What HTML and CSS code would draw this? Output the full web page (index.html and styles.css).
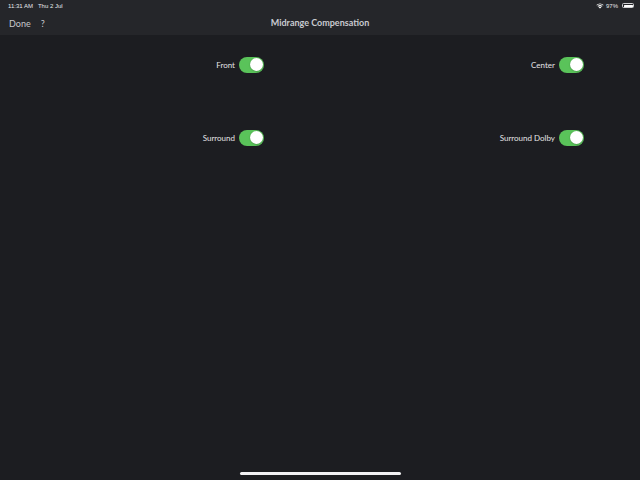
FILE: index.html
```html
<!DOCTYPE html>
<html>
<head>
<meta charset="utf-8">
<link rel="stylesheet" href="styles.css">
</head>
<body>
<div class="screen">
  <header class="top">
    <div class="status">
      <div class="status-left"><span>11:31 AM</span><span>Thu 2 Jul</span></div>
      <div class="status-right">
        <svg class="wifi" width="8" height="6" viewBox="0 0 8 6"><path d="M4 5.6 L2.6 4.2 A2 2 0 0 1 5.4 4.2 Z" fill="#fff"/><path d="M1.6 3.2 A3.4 3.4 0 0 1 6.4 3.2 L5.8 3.8 A2.6 2.6 0 0 0 2.2 3.8 Z" fill="#fff"/><path d="M0.4 2 A5 5 0 0 1 7.6 2 L7 2.6 A4.2 4.2 0 0 0 1 2.6 Z" fill="#fff"/></svg>
        <span>97%</span>
        <span class="battery"><span class="battery-fill"></span></span>
      </div>
    </div>
    <nav class="nav">
      <div class="nav-left"><span>Done</span><span>?</span></div>
      <div class="nav-title">Midrange Compensation</div>
    </nav>
  </header>
  <main class="content">
    <div class="grid">
      <div class="cell"><span class="label">Front</span><span class="toggle"><span class="knob"></span></span></div>
      <div class="cell"><span class="label">Center</span><span class="toggle"><span class="knob"></span></span></div>
      <div class="cell"><span class="label">Surround</span><span class="toggle"><span class="knob"></span></span></div>
      <div class="cell"><span class="label">Surround Dolby</span><span class="toggle"><span class="knob"></span></span></div>
    </div>
  </main>
  <div class="home"><span class="home-bar"></span></div>
</div>
</body>
</html>
```
FILE: styles.css
```css
* { box-sizing: border-box; }
html, body { margin: 0; padding: 0; }
body {
  background: #1c1d21;
  font-family: "Lato", "Liberation Sans", sans-serif;
  color: #e6e6e8;
}
.screen {
  width: 640px;
  height: 480px;
  display: flex;
  flex-direction: column;
  overflow: hidden;
}
.top {
  background: #25262a;
  height: 35px;
  flex: none;
}
.status {
  height: 11px;
  display: flex;
  justify-content: space-between;
  align-items: center;
  padding: 0 6px 0 8px;
  font-family: "Liberation Sans", sans-serif;
  font-size: 6px;
  color: #e8e8ea;
}
.status-left { display: flex; gap: 5px; }
.status-right { display: flex; align-items: center; gap: 2px; }
.battery {
  width: 12px;
  height: 5px;
  border: 1px solid #cfcfd2;
  border-radius: 1.5px;
  padding: 0.5px;
  display: flex;
  margin-left: 2px;
}
.battery-fill { flex: 1; background: #fff; border-radius: 0.5px; }
.nav {
  height: 24px;
  display: flex;
  align-items: center;
  padding: 0 0 0 9px;
  position: relative;
}
.nav-left {
  display: flex;
  gap: 10px;
  font-size: 9px;
  color: #c8c8cc;
}
.nav-title {
  position: absolute;
  left: 0;
  right: 0;
  top: 6px;
  text-align: center;
  font-size: 9px;
  font-weight: bold;
  color: #c9cad0;
  pointer-events: none;
}
.content { flex: 1; }
.grid {
  display: grid;
  grid-template-columns: 320px 320px;
  row-gap: 56px;
  padding-top: 21px;
}
.cell {
  display: flex;
  justify-content: flex-end;
  align-items: center;
  gap: 4px;
  padding-right: 56px;
  height: 17px;
}
.label {
  font-size: 8px;
  color: #e4e4e6;
}
.toggle {
  width: 25px;
  height: 16px;
  border-radius: 8px;
  background: #5ac35a;
  display: flex;
  align-items: center;
  justify-content: flex-end;
  padding-right: 1.5px;
}
.knob {
  width: 13px;
  height: 13px;
  border-radius: 50%;
  background: #fff;
  box-shadow: 0 0.5px 1.5px rgba(0,0,0,0.3);
}
.home {
  height: 10px;
  flex: none;
  display: flex;
  justify-content: center;
  padding-top: 2px;
}
.home-bar {
  width: 161px;
  height: 3px;
  border-radius: 2px;
  background: #f2f2f4;
}
```
